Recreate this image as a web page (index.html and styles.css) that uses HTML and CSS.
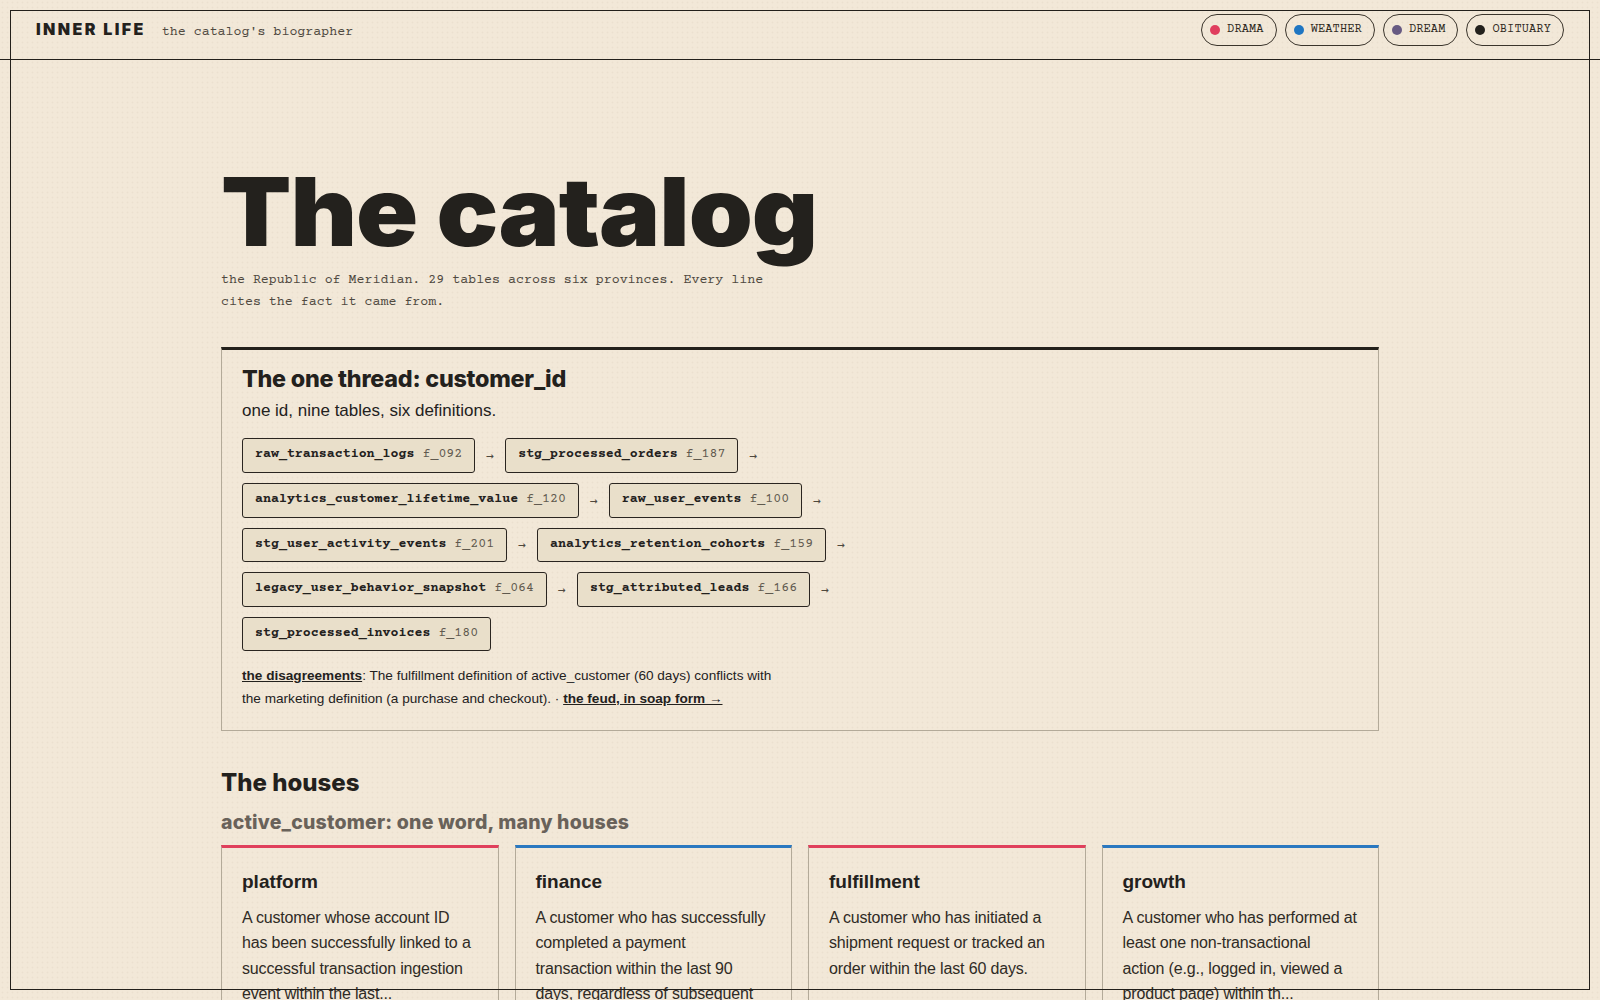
FILE: index.html
```html
<!DOCTYPE html>
<html lang="en">
<head>
    <meta charset="UTF-8">
    <meta name="viewport" content="width=device-width, initial-scale=1.0">
    <title>Inner Life — The catalog</title>
    <link rel="stylesheet" href="styles.css">
</head>
<body>
    <div class="frame"></div>

    <header class="topbar">
        <div class="brand">
            <span class="logo">INNER LIFE</span>
            <span class="tagline">the catalog's biographer</span>
        </div>
        <nav class="modes">
            <a class="mode" href="#"><span class="dot drama"></span>DRAMA</a>
            <a class="mode" href="#"><span class="dot weather"></span>WEATHER</a>
            <a class="mode" href="#"><span class="dot dream"></span>DREAM</a>
            <a class="mode" href="#"><span class="dot obituary"></span>OBITUARY</a>
        </nav>
    </header>

    <main class="page">
        <section class="hero">
            <h1>The catalog</h1>
            <p class="lede">the Republic of Meridian. 29 tables across six provinces. Every line cites the fact it came from.</p>
        </section>

        <section class="thread">
            <h2>The one thread: customer_id</h2>
            <p class="thread-sub">one id, nine tables, six definitions.</p>
            <div class="chain">
                <span class="chip"><b>raw_transaction_logs</b> <span class="fact">f_092</span></span>
                <span class="arrow">→</span>
                <span class="chip"><b>stg_processed_orders</b> <span class="fact">f_187</span></span>
                <span class="arrow">→</span>
                <span class="chip"><b>analytics_customer_lifetime_value</b> <span class="fact">f_120</span></span>
                <span class="arrow">→</span>
                <span class="chip"><b>raw_user_events</b> <span class="fact">f_100</span></span>
                <span class="arrow">→</span>
                <span class="chip"><b>stg_user_activity_events</b> <span class="fact">f_201</span></span>
                <span class="arrow">→</span>
                <span class="chip"><b>analytics_retention_cohorts</b> <span class="fact">f_159</span></span>
                <span class="arrow">→</span>
                <span class="chip"><b>legacy_user_behavior_snapshot</b> <span class="fact">f_064</span></span>
                <span class="arrow">→</span>
                <span class="chip"><b>stg_attributed_leads</b> <span class="fact">f_166</span></span>
                <span class="arrow">→</span>
                <span class="chip"><b>stg_processed_invoices</b> <span class="fact">f_180</span></span>
            </div>
            <p class="disagree"><a href="#">the disagreements</a>: The fulfillment definition of active_customer (60 days) conflicts with the marketing definition (a purchase and checkout). · <a href="#">the feud, in soap form →</a></p>
        </section>

        <section class="houses">
            <h2>The houses</h2>
            <h3>active_customer: one word, many houses</h3>
            <div class="cards">
                <article class="house red">
                    <h4>platform</h4>
                    <p>A customer whose account ID<br>has been successfully linked to a successful transaction ingestion event within the last...</p>
                </article>
                <article class="house blue">
                    <h4>finance</h4>
                    <p>A customer who has successfully completed a payment<br>transaction within the last 90 days, regardless of subsequent refu...</p>
                </article>
                <article class="house red">
                    <h4>fulfillment</h4>
                    <p>A customer who has initiated a shipment request or tracked an order within the last 60 days.</p>
                </article>
                <article class="house blue">
                    <h4>growth</h4>
                    <p>A customer who has performed at least one non-transactional<br>action (e.g., logged in, viewed a product page) within th...</p>
                </article>
            </div>
        </section>
    </main>
</body>
</html>
```

FILE: styles.css
```css
* {
    box-sizing: border-box;
}
html, body {
    margin: 0;
}
body {
    background-color: #f2e8d8;
    background-image: radial-gradient(rgba(110, 85, 50, 0.05) 0.7px, transparent 1.2px);
    background-size: 5px 5px;
    color: #23211d;
    font-family: "Liberation Sans", Arial, sans-serif;
}

/* thin outline sitting over the whole page */
.frame {
    position: fixed;
    inset: 10px;
    border: 1px solid #23201b;
    pointer-events: none;
    z-index: 10;
}

.topbar {
    display: flex;
    align-items: center;
    justify-content: space-between;
    height: 60px;
    padding: 0 36px;
    border-bottom: 1px solid #23201b;
}
.brand {
    display: flex;
    align-items: baseline;
    gap: 16px;
}
.logo {
    font-family: Inter, "Liberation Sans", sans-serif;
    font-weight: 900;
    font-size: 16px;
    letter-spacing: 0.15em;
}
.tagline {
    font-family: "Courier Prime", "Nimbus Mono PS", "Liberation Mono", monospace;
    font-size: 13.3px;
    color: #4f493f;
}
.modes {
    display: flex;
    gap: 8px;
}
.mode {
    display: inline-flex;
    align-items: center;
    gap: 7px;
    height: 32px;
    padding: 0 12px 0 8px;
    border: 1px solid #3b352c;
    border-radius: 16px;
    font-family: "Courier Prime", "Nimbus Mono PS", "Liberation Mono", monospace;
    font-size: 12px;
    letter-spacing: 0.01em;
    color: #2f2a23;
    text-decoration: none;
}
.dot {
    width: 10px;
    height: 10px;
    border-radius: 50%;
}
.dot.drama { background: #e03e5e; }
.dot.weather { background: #1f76c2; }
.dot.dream { background: #675a82; }
.dot.obituary { background: #23211d; }

.page {
    max-width: 1158px;
    margin: 0 auto;
    padding-top: 104px;
}
.hero h1 {
    margin: 0;
    font-family: Inter, "Liberation Sans", sans-serif;
    font-weight: 900;
    font-size: 95px;
    line-height: 1;
    letter-spacing: -0.01em;
    transform: scaleX(1.08);
    transform-origin: left center;
}
.lede {
    max-width: 560px;
    margin: 11px 0 0;
    font-family: "Courier Prime", "Nimbus Mono PS", "Liberation Mono", monospace;
    font-size: 13.3px;
    line-height: 22.4px;
    color: #4f493f;
}

.thread {
    margin-top: 32px;
    padding: 15px 20px 20px;
    border: 1px solid #b3aa99;
    border-top: 3px solid #23201b;
}
.thread h2 {
    margin: 0;
    font-family: Inter, "Liberation Sans", sans-serif;
    font-weight: 800;
    font-size: 23.3px;
    line-height: 28px;
    letter-spacing: -0.01em;
}
.thread-sub {
    margin: 5px 0 0;
    font-size: 17px;
    line-height: 1.5;
}
.chain {
    display: flex;
    flex-wrap: wrap;
    align-items: center;
    gap: 10px 11px;
    max-width: 720px;
    margin-top: 15px;
}
.chip {
    padding: 7px 12px;
    border: 1px solid #2a2520;
    border-radius: 3px;
    background: #e9dfca;
    font-family: "Courier Prime", "Nimbus Mono PS", "Liberation Mono", monospace;
    font-size: 13.3px;
    line-height: 18.6px;
    white-space: nowrap;
}
.chip b {
    font-weight: 700;
}
.fact {
    color: #5f594e;
}
.arrow {
    font-family: "DejaVu Sans Mono", monospace;
    font-size: 13px;
    color: #4f493f;
}
.disagree {
    max-width: 545px;
    margin: 14px 0 0;
    font-size: 13.6px;
    line-height: 22.4px;
}
.disagree a {
    color: inherit;
    font-weight: 700;
    text-decoration: underline;
}

.houses {
    margin-top: 38px;
}
.houses h2 {
    margin: 0;
    font-family: Inter, "Liberation Sans", sans-serif;
    font-weight: 800;
    font-size: 24px;
    line-height: 1.2;
}
.houses h3 {
    margin: 12px 0 0;
    font-family: Inter, "Liberation Sans", sans-serif;
    font-weight: 800;
    font-size: 19.5px;
    line-height: 24px;
    letter-spacing: 0.01em;
    color: #69625a;
}
.cards {
    display: grid;
    grid-template-columns: repeat(4, 1fr);
    gap: 16px;
    margin-top: 11px;
}
.house {
    padding: 22px 17px 24px 20px;
    border: 1px solid #b3aa99;
    border-top: 3px solid #b3aa99;
}
.house.red { border-top-color: #e0405c; }
.house.blue { border-top-color: #2a78c0; }
.house h4 {
    margin: 0;
    font-size: 19px;
    line-height: 1.3;
}
.house p {
    margin: 10px 0 0;
    font-size: 16px;
    line-height: 1.6;
    letter-spacing: -0.01em;
    color: #2f2b25;
}
```
